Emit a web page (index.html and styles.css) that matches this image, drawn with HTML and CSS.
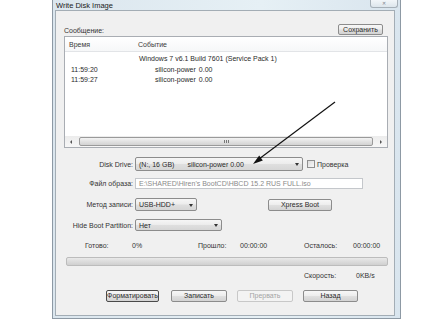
FILE: index.html
```html
<!DOCTYPE html>
<html>
<head>
<meta charset="utf-8">
<link rel="stylesheet" href="styles.css">
</head>
<body>
<div class="window">
  <div class="titlebar">
    <span class="title">Write Disk Image</span>
    <span class="close">✕</span>
  </div>
  <div class="client">
    <div class="msg-head">
      <span class="label">Сообщение:</span>
      <button class="btn save">Сохранить</button>
    </div>
    <div class="list">
      <div class="list-header"><span class="hcol1">Время</span><span class="hcol2">Событие</span></div>
      <div class="list-body">
        <div class="row"><span class="c1"></span><span class="c2">Windows 7 v6.1 Build 7601 (Service Pack 1)</span></div>
        <div class="row"><span class="c1">11:59:20</span><span class="c2 ev">silicon-power<span class="val">0.00</span></span></div>
        <div class="row"><span class="c1">11:59:27</span><span class="c2 ev">silicon-power<span class="val">0.00</span></span></div>
      </div>
      <div class="hscroll">
        <span class="sarrow left"></span>
        <span class="thumb"><span class="grip"></span></span>
        <span class="sarrow right"></span>
      </div>
    </div>

    <div class="form">
      <div class="frow r1">
        <span class="flabel">Disk Drive:</span>
        <div class="combo drive"><span>(N:, 16 GB)</span><span class="d-name">silicon-power</span><span class="d-val">0.00</span><span class="drop"></span></div>
        <span class="check"></span><span class="check-label">Проверка</span>
      </div>
      <div class="frow r2">
        <span class="flabel">Файл образа:</span>
        <div class="textfield">E:\SHARED\Hiren's BootCD\HBCD 15.2 RUS FULL.iso</div>
      </div>
      <div class="frow r3">
        <span class="flabel">Метод записи:</span>
        <div class="combo method"><span>USB-HDD+</span><span class="drop"></span></div>
        <button class="btn xpress">Xpress Boot</button>
      </div>
      <div class="frow r4">
        <span class="flabel">Hide Boot Partition:</span>
        <div class="combo hide"><span>Нет</span><span class="drop"></span></div>
      </div>
    </div>

    <div class="status">
      <span>Готово:</span><span>0%</span><span>Прошло:</span><span>00:00:00</span><span>Осталось:</span><span>00:00:00</span>
    </div>
    <div class="progress"></div>
    <div class="speed"><span>Скорость:</span><span>0KB/s</span></div>

    <div class="buttons">
      <button class="btn default b-format">Форматировать</button>
      <button class="btn b-write">Записать</button>
      <button class="btn disabled b-stop">Прервать</button>
      <button class="btn b-back">Назад</button>
    </div>
  </div>
</div>
<svg class="arrow" width="443" height="320" viewBox="0 0 443 320">
  <line x1="335" y1="102" x2="259" y2="159" stroke="#111" stroke-width="1.2"/>
  <polygon points="253,164 262.8,160.4 259.2,155.6" fill="#111"/>
</svg>
</body>
</html>
```

FILE: styles.css
```css
html, body {
  margin: 0;
  padding: 0;
}
body {
  width: 443px;
  height: 320px;
  background: #ffffff;
  font-family: "Liberation Sans", Arial, sans-serif;
  font-size: 7px;
  color: #2a2a2a;
  position: relative;
  overflow: hidden;
}
.window {
  margin-left: 52px;
  width: 349px;
  height: 319px;
  box-sizing: border-box;
  border: 1px solid #8d99a4;
  border-top: 0;
  background: linear-gradient(90deg, #dbe6ee, #e6f0f5 60%, #d9e5ee);
  padding: 0 5px 2px 2px;
  display: flex;
  flex-direction: column;
}
.titlebar {
  height: 10px;
  display: flex;
  justify-content: space-between;
  align-items: flex-start;
}
.title {
  font-size: 7.5px;
  line-height: 11px;
  color: #1a1a1a;
  margin-left: 1px;
}
.close {
  width: 28px;
  height: 8px;
  margin-right: -3px;
  box-sizing: border-box;
  border: 1px solid #a6b0b8;
  border-top: 0;
  border-radius: 0 0 3px 3px;
  background: linear-gradient(#f2f6f9, #dde6ec);
  color: #7d858c;
  font-size: 5px;
  line-height: 7px;
  text-align: center;
}
.client {
  flex: 1;
  background: #f0f0f0;
  border: 1px solid #a3adb5;
  display: flex;
  flex-direction: column;
}
.msg-head {
  margin-top: 12px;
  height: 12px;
  display: flex;
  justify-content: space-between;
  align-items: flex-end;
  padding: 0 11px 0 8px;
}
.label {
  line-height: 9px;
  color: #333;
}
.btn {
  font: inherit;
  font-size: 7px;
  color: #2a2a2a;
  height: 12px;
  padding: 0;
  box-sizing: border-box;
  border: 1px solid #8c8c8c;
  border-radius: 2px;
  background: linear-gradient(#f7f7f7 0%, #ededed 48%, #e0e0e0 52%, #d3d3d3 100%);
  line-height: 10px;
  text-align: center;
}
.save {
  width: 45px;
  height: 11px;
  line-height: 9px;
}
.list {
  margin: 1px 6px 0 8px;
  height: 112px;
  box-sizing: border-box;
  border: 1px solid #a9adb3;
  background: #ffffff;
  display: flex;
  flex-direction: column;
}
.list-header {
  height: 15px;
  box-sizing: border-box;
  border-bottom: 1px solid #e2e4e7;
  background: linear-gradient(#ffffff, #f6f7f8);
  display: flex;
  align-items: center;
  padding-left: 4px;
  color: #3a3a3a;
}
.hcol1 { width: 69px; }
.list-body {
  flex: 1;
  padding-top: 2px;
}
.row {
  height: 10.5px;
  line-height: 10.5px;
  display: flex;
  color: #2a2a2a;
}
.c1 {
  width: 68px;
  padding-left: 6px;
}
.c2 { white-space: nowrap; }
.ev { margin-left: 16px; }
.val { margin-left: 3px; }
.hscroll {
  height: 11px;
  margin: 0 0 0 0;
  display: flex;
  align-items: center;
  background: linear-gradient(#ececec, #f7f7f7);
  padding: 0 1px;
}
.sarrow {
  width: 11px;
  height: 11px;
  position: relative;
}
.sarrow::after {
  content: "";
  position: absolute;
  top: 3.5px;
  width: 0;
  height: 0;
  border-top: 2px solid transparent;
  border-bottom: 2px solid transparent;
}
.sarrow.left::after {
  left: 4px;
  border-right: 2px solid #555;
}
.sarrow.right::after {
  left: 5px;
  border-left: 2px solid #555;
}
.thumb {
  flex: 1;
  height: 9px;
  margin: 0 2px;
  box-sizing: border-box;
  border: 1px solid #9a9a9a;
  border-radius: 2px;
  background: linear-gradient(#f3f3f3, #e2e2e2 50%, #d2d2d2);
  display: flex;
  justify-content: center;
  align-items: center;
}
.grip {
  width: 5px;
  height: 3px;
  background: repeating-linear-gradient(90deg, #777 0 1px, transparent 1px 2px);
}
.form {
  margin-top: 9px;
  display: flex;
  flex-direction: column;
}
.frow {
  display: flex;
  align-items: center;
}
.flabel {
  width: 77px;
  margin-right: 2px;
  text-align: right;
  color: #333;
  white-space: nowrap;
}
.r1 { height: 14px; }
.r2 { height: 11px; margin-top: 7px; }
.r3 { height: 13px; margin-top: 9px; }
.r4 { height: 12px; margin-top: 8px; }
.combo {
  height: 100%;
  box-sizing: border-box;
  border: 1px solid #8c8c8c;
  border-radius: 2px;
  background: linear-gradient(#f6f6f6 0%, #ececec 48%, #dfdfdf 52%, #d6d6d6 100%);
  display: flex;
  align-items: center;
  padding-left: 3px;
  position: relative;
  color: #2a2a2a;
  white-space: nowrap;
}
.drop {
  position: absolute;
  right: 3px;
  top: 50%;
  margin-top: -1px;
  width: 0;
  height: 0;
  border-left: 2.5px solid transparent;
  border-right: 2.5px solid transparent;
  border-top: 3px solid #333;
}
.drive { width: 168px; }
.d-name { margin-left: 13px; }
.d-val { margin-left: 2px; }
.check {
  width: 8px;
  height: 8px;
  margin-left: 4px;
  box-sizing: border-box;
  border: 1px solid #8f8f8f;
  background: linear-gradient(135deg, #dcdcdc, #f8f8f8);
}
.check-label {
  margin-left: 2px;
  color: #333;
}
.textfield {
  width: 228px;
  height: 100%;
  box-sizing: border-box;
  border: 1px solid #c4c7cb;
  background: #ffffff;
  color: #8a8a8a;
  padding-left: 3px;
  line-height: 9px;
  white-space: nowrap;
}
.method { width: 62px; }
.xpress {
  width: 64px;
  margin-left: 71px;
  align-self: flex-end;
}
.hide { width: 87px; }
.status {
  margin-top: 10px;
  height: 10px;
  line-height: 10px;
  display: grid;
  grid-template-columns: 47px 66px 42px 64px 49px auto;
  padding-left: 29px;
  color: #333;
}
.progress {
  margin: 6px 6px 0 10px;
  height: 9px;
  box-sizing: border-box;
  border: 1px solid #bcbcbc;
  border-radius: 2px;
  background: linear-gradient(#e9e9e9, #dcdcdc 50%, #d0d0d0);
}
.speed {
  margin-top: 5px;
  height: 10px;
  line-height: 10px;
  display: grid;
  grid-template-columns: 52px auto;
  padding-left: 248px;
  color: #333;
}
.buttons {
  margin-top: 9px;
  display: flex;
  padding-left: 50px;
}
.b-format { width: 53px; }
.b-write { width: 56px; margin-left: 12px; }
.b-stop { width: 56px; margin-left: 10px; }
.b-back { width: 55px; margin-left: 10px; }
.btn.default {
  border-color: #4a4a4a;
  white-space: nowrap;
  overflow: visible;
}
.btn.disabled {
  border-color: #c8c8c8;
  background: #f3f3f3;
  color: #a4a4a4;
}
.arrow {
  position: absolute;
  left: 0;
  top: 0;
  pointer-events: none;
}
```
